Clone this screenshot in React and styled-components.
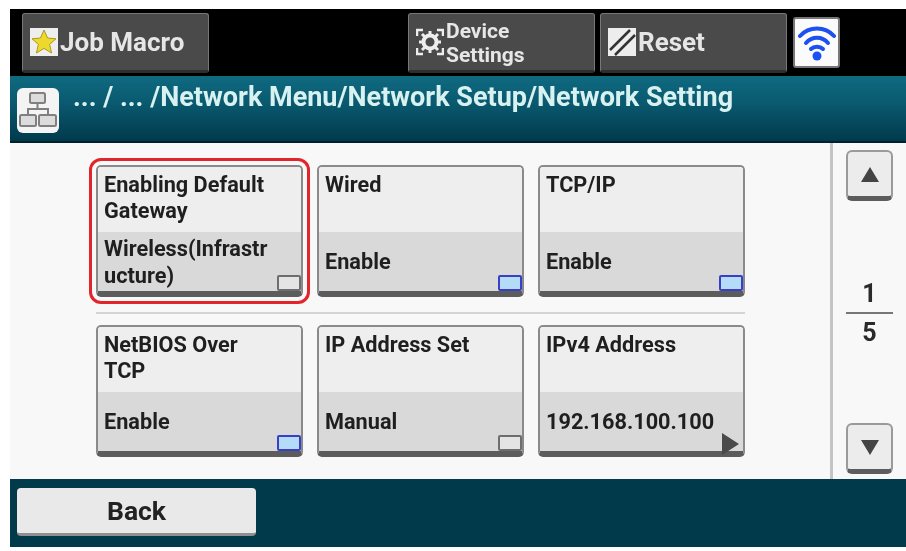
import React from 'react'
import styled, { createGlobalStyle } from 'styled-components'

const GlobalStyle = createGlobalStyle`
  html, body { margin: 0; padding: 0; background: #ffffff; }
  body { font-family: Roboto, "Liberation Sans", sans-serif; }
`

const Screen = styled.div`
  width: 896px;
  height: 538px;
  margin: 9px 0 0 10px;
  display: grid;
  grid-template-rows: 67px 67px 336px 68px;
  filter: blur(0.7px);
  overflow: hidden;
`

const TopBar = styled.div`
  background: #000;
  display: flex;
  align-items: flex-start;
  padding: 4px 0 0 12px;
`

const TopButton = styled.div`
  box-sizing: border-box;
  width: 187px;
  height: 60px;
  margin-left: ${p => p.$gap || 0}px;
  background: #4a4a4a;
  border: 1px solid #777;
  border-bottom: 3px solid #2e2e2e;
  border-radius: 3px;
  display: flex;
  align-items: center;
  padding: 0 0 0 7px;
  color: #e6e6e6;
  font-weight: 700;
  font-size: 26px;
`

const TwoLine = styled.span`
  font-size: 21px;
  line-height: 24px;
  margin-top: 2px;
`

const WifiBox = styled.div`
  box-sizing: border-box;
  width: 47px;
  height: 51px;
  margin: 4px 0 0 6px;
  background: #fbfbfb;
  border: 2px solid #777;
  border-radius: 3px;
  display: flex;
  align-items: center;
  justify-content: center;
`

const PathBar = styled.div`
  background: linear-gradient(#0f6a80, #0a5a70 40%, #013a4c);
  display: flex;
  align-items: flex-start;
  padding: 12px 0 0 7px;
  border-bottom: 2px solid #00222c;
  box-sizing: border-box;
`

const PathIcon = styled.div`
  width: 42px;
  height: 45px;
  border-radius: 6px;
  background: #f4f4f4;
  flex: none;
`

const PathText = styled.div`
  margin: -5px 0 0 14px;
  color: #d8f2f2;
  font-size: 27px;
  line-height: 28px;
  font-weight: 700;
  white-space: nowrap;
`

const Body = styled.div`
  background: #f8f8f8;
  display: grid;
  grid-template-columns: 823px 1fr;
`

const TileArea = styled.div`
  padding: 22px 0 0 86px;
  border-right: 3px solid #c4c4c4;
`

const TileRow = styled.div`
  display: flex;
  gap: 14px;
`

const RowRule = styled.div`
  width: 649px;
  height: 2px;
  background: #d4d4d4;
  margin: 15px 0 11px;
`

const Tile = styled.div`
  position: relative;
  box-sizing: border-box;
  width: 207px;
  height: 132px;
  display: flex;
  flex-direction: column;
  border: 2px solid #8a8a8a;
  border-bottom: 6px solid #5c5c5c;
  border-radius: 5px;
  outline: ${p => (p.$selected ? '3px solid #e2252b' : 'none')};
  outline-offset: 4px;
`

const TileName = styled.div`
  height: 65px;
  box-sizing: border-box;
  padding: 5px 6px 0;
  background: #eeeeee;
  border-radius: 3px 3px 0 0;
  font-size: 21.7px;
  line-height: 26px;
  font-weight: 700;
  color: #1f1f1f;
  white-space: nowrap;
`

const TileValue = styled.div`
  flex: 1;
  box-sizing: border-box;
  padding: 0 6px;
  background: #d9d9d9;
  display: flex;
  align-items: center;
  font-size: 21.7px;
  line-height: 27px;
  font-weight: 700;
  color: #1f1f1f;
  white-space: nowrap;
`

const Lamp = styled.div`
  position: absolute;
  right: 0;
  bottom: 0;
  box-sizing: border-box;
  width: 24px;
  height: 16px;
  border: 2.5px solid ${p => (p.$on ? '#3a3fc8' : '#6e6e6e')};
  background: ${p => (p.$on ? '#b4dcf8' : '#e4e4e4')};
  border-radius: 2px;
`

const Arrow = styled.div`
  position: absolute;
  right: 4px;
  bottom: -4px;
  width: 0;
  height: 0;
  border-left: 17px solid #4a4a4a;
  border-top: 11px solid transparent;
  border-bottom: 11px solid transparent;
`

const Pager = styled.div`
  display: flex;
  flex-direction: column;
  align-items: flex-start;
  padding: 7px 0 0 13px;
`

const PageButton = styled.div`
  box-sizing: border-box;
  width: 47px;
  height: 51px;
  background: #ececec;
  border: 2px solid #9a9a9a;
  border-bottom: 5px solid #5c5c5c;
  border-radius: 6px;
  display: flex;
  align-items: center;
  justify-content: center;
`

const Triangle = styled.div`
  width: 0;
  height: 0;
  border-left: 9px solid transparent;
  border-right: 9px solid transparent;
  ${p => (p.$down ? 'border-top: 15px solid #444;' : 'border-bottom: 15px solid #444;')}
`

const PageCount = styled.div`
  width: 47px;
  margin: 74px 0 72px;
  text-align: center;
  font-size: 25px;
  font-weight: 700;
  color: #2a2a2a;
  line-height: 37px;
`

const PageNumber = styled.div`
  border-bottom: ${p => (p.$top ? '2px solid #777' : 'none')};
`

const Footer = styled.div`
  background: #013a4a;
  padding: 9px 0 0 7px;
`

const BackButton = styled.div`
  box-sizing: border-box;
  width: 239px;
  height: 48px;
  background: #e9e9e9;
  border-bottom: 3px solid #8f8f8f;
  border-radius: 4px;
  display: flex;
  align-items: center;
  justify-content: center;
  font-size: 26.5px;
  font-weight: 700;
  color: #222;
`

const StarIcon = () => (
  <svg width="28" height="28" viewBox="0 0 28 28" style={{ marginRight: 2, flex: 'none' }}>
    <rect width="28" height="28" fill="#eeeeee" />
    <path d="M14 2l3.600 8 8.400.8-6.400 5.600 2 8.600L14 20.400 6.400 25l2-8.600L2 10.800l8.400-.8z" fill="#ecd92c" stroke="#a99a20" strokeWidth="1" />
  </svg>
)

const GearIcon = () => (
  <svg width="28" height="28" viewBox="0 0 28 28" style={{ marginRight: 2, flex: 'none' }}>
    <path d="M1 8V2h6M21 2h6v6M27 20v6h-6M7 26H1v-6" fill="none" stroke="#ededed" strokeWidth="2.500" />
    <circle cx="14" cy="14" r="6.500" fill="none" stroke="#ededed" strokeWidth="4" />
    <path d="M14 3v5M14 20v5M3 14h5M20 14h5M6 6l4 4M18 18l4 4M22 6l-4 4M10 18l-4 4" stroke="#ededed" strokeWidth="3" />
  </svg>
)

const ResetIcon = () => (
  <svg width="28" height="28" viewBox="0 0 28 28" style={{ marginRight: 2, flex: 'none' }}>
    <rect width="28" height="28" fill="#ededed" />
    <path d="M2 22L22 2M7 27L27 7" stroke="#333" strokeWidth="2.500" />
  </svg>
)

const WifiIcon = () => (
  <svg width="38" height="40" viewBox="0 0 38 40">
    <g fill="none" stroke="#1c50f0" strokeWidth="4" strokeLinecap="round">
      <path d="M2 13C11 3 27 3 36 13" />
      <path d="M8 20C14 13 24 13 30 20" />
      <path d="M13 26C16 23 22 23 25 26" />
    </g>
    <circle cx="19" cy="33" r="4.500" fill="#1c50f0" />
  </svg>
)

const NetworkIcon = () => (
  <svg width="42" height="45" viewBox="0 0 42 45" fill="none" stroke="#808080" strokeWidth="2" style={{ display: 'block' }}>
    <rect x="13" y="5" width="15" height="10" rx="1.500" fill="#dcdcdc" />
    <path d="M20.500 15v6M11 27v-6h20v6" />
    <rect x="3" y="27" width="16" height="11" rx="1.500" fill="#dcdcdc" />
    <rect x="22" y="27" width="17" height="11" rx="1.500" fill="#dcdcdc" />
  </svg>
)

const rows = [
  [
    { name: ['Enabling Default', 'Gateway'], value: ['Wireless(Infrastr', 'ucture)'], mark: 'off', selected: true },
    { name: ['Wired'], value: ['Enable'], mark: 'on' },
    { name: ['TCP/IP'], value: ['Enable'], mark: 'on' },
  ],
  [
    { name: ['NetBIOS Over', 'TCP'], value: ['Enable'], mark: 'on' },
    { name: ['IP Address Set'], value: ['Manual'], mark: 'off' },
    { name: ['IPv4 Address'], value: ['192.168.100.100'], mark: 'arrow' },
  ],
]

const Lines = ({ items }) => items.map((line, i) => <div key={i}>{line}</div>)

const SettingTile = ({ name, value, mark, selected }) => (
  <Tile $selected={selected}>
    <TileName><Lines items={name} /></TileName>
    <TileValue><div><Lines items={value} /></div></TileValue>
    {mark === 'arrow' ? <Arrow /> : <Lamp $on={mark === 'on'} />}
  </Tile>
)

export default function App() {
  return (
    <>
      <GlobalStyle />
      <Screen>
        <TopBar>
          <TopButton><StarIcon />Job Macro</TopButton>
          <TopButton $gap={199}><GearIcon /><TwoLine>Device<br />Settings</TwoLine></TopButton>
          <TopButton $gap={5}><ResetIcon />Reset</TopButton>
          <WifiBox><WifiIcon /></WifiBox>
        </TopBar>
        <PathBar>
          <PathIcon><NetworkIcon /></PathIcon>
          <PathText>... / ... /Network Menu/Network Setup/Network Setting</PathText>
        </PathBar>
        <Body>
          <TileArea>
            <TileRow>{rows[0].map((t, i) => <SettingTile key={i} {...t} />)}</TileRow>
            <RowRule />
            <TileRow>{rows[1].map((t, i) => <SettingTile key={i} {...t} />)}</TileRow>
          </TileArea>
          <Pager>
            <PageButton><Triangle /></PageButton>
            <PageCount>
              <PageNumber $top>1</PageNumber>
              <PageNumber>5</PageNumber>
            </PageCount>
            <PageButton><Triangle $down /></PageButton>
          </Pager>
        </Body>
        <Footer>
          <BackButton>Back</BackButton>
        </Footer>
      </Screen>
    </>
  )
}
